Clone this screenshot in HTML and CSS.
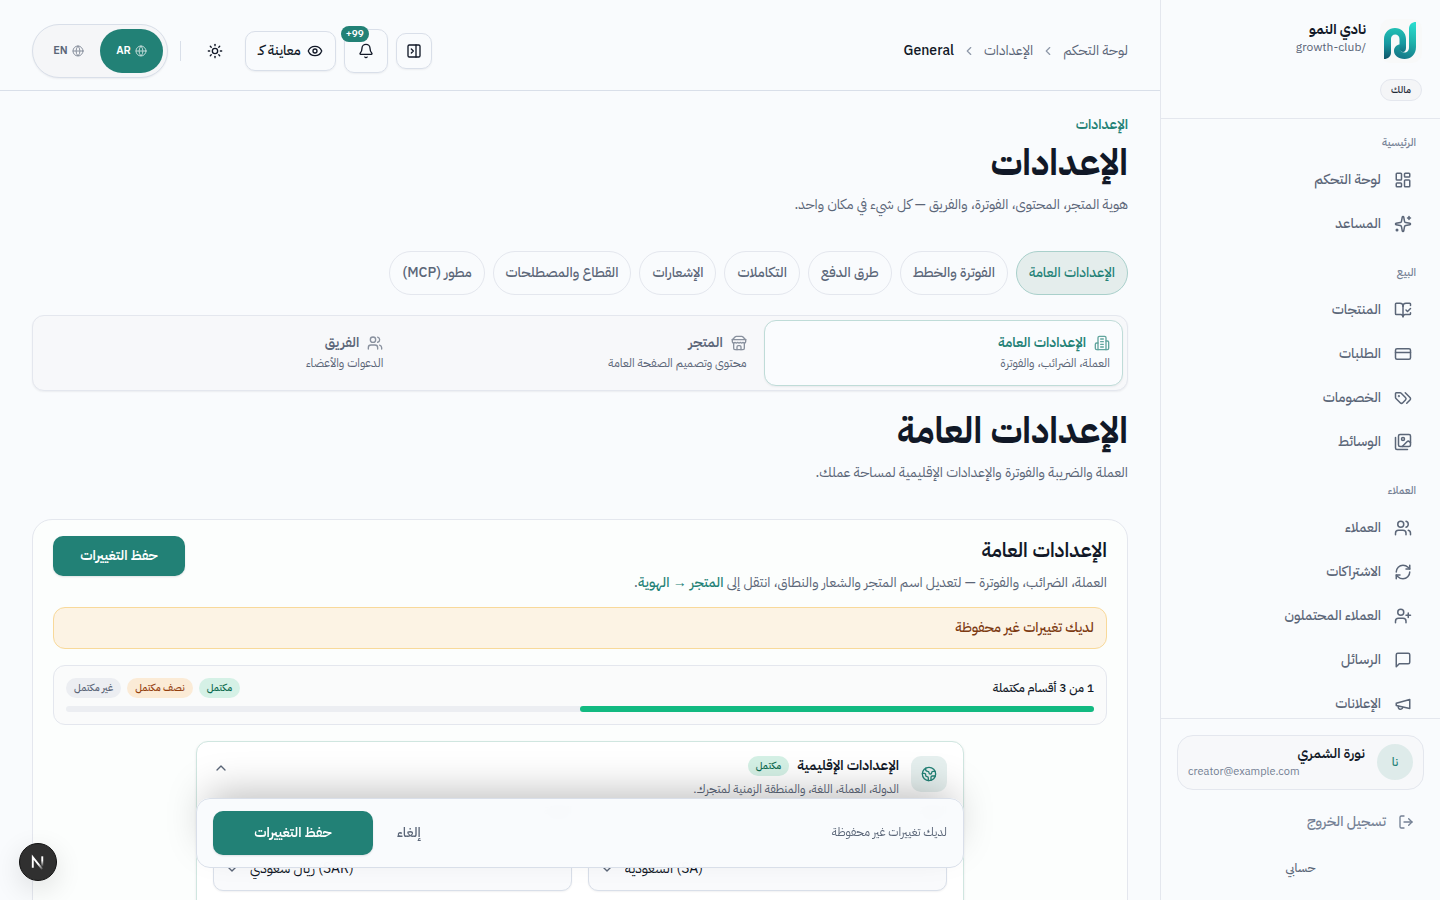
FILE: index.html
```html
<!DOCTYPE html>
<html lang="ar" dir="rtl">
<head>
<meta charset="utf-8">
<meta name="viewport" content="width=device-width, initial-scale=1">
<title>الإعدادات العامة — نادي النمو</title>
<link rel="stylesheet" href="styles.css">
</head>
<body>
<svg class="sprite" aria-hidden="true">
  <symbol id="i-dashboard" viewBox="0 0 24 24"><rect width="7" height="9" x="3" y="3" rx="1"/><rect width="7" height="5" x="14" y="3" rx="1"/><rect width="7" height="9" x="14" y="12" rx="1"/><rect width="7" height="5" x="3" y="16" rx="1"/></symbol>
  <symbol id="i-sparkles" viewBox="0 0 24 24"><path d="M11.017 2.814a1 1 0 0 1 1.966 0l1.051 5.558a2 2 0 0 0 1.594 1.594l5.558 1.051a1 1 0 0 1 0 1.966l-5.558 1.051a2 2 0 0 0-1.594 1.594l-1.051 5.558a1 1 0 0 1-1.966 0l-1.051-5.558a2 2 0 0 0-1.594-1.594l-5.558-1.051a1 1 0 0 1 0-1.966l5.558-1.051a2 2 0 0 0 1.594-1.594z"/><path d="M20 2v4"/><path d="M22 4h-4"/><circle cx="4" cy="20" r="1"/></symbol>
  <symbol id="i-book" viewBox="0 0 24 24"><path d="M12 21V7"/><path d="m16 12 2 2 4-4"/><path d="M22 6V4a1 1 0 0 0-1-1h-5a4 4 0 0 0-4 4 4 4 0 0 0-4-4H3a1 1 0 0 0-1 1v13a1 1 0 0 0 1 1h6a3 3 0 0 1 3 3 3 3 0 0 1 3-3h6a1 1 0 0 0 1-1v-1.3"/></symbol>
  <symbol id="i-card" viewBox="0 0 24 24"><rect width="20" height="14" x="2" y="5" rx="2"/><path d="M2 10h20"/></symbol>
  <symbol id="i-tags" viewBox="0 0 24 24"><path d="m15 5 6.300 6.300a2.400 2.400 0 0 1 0 3.400L17 19"/><path d="M9.586 5.586A2 2 0 0 0 8.172 5H3a1 1 0 0 0-1 1v5.172a2 2 0 0 0 .586 1.414L8.290 18.290a2.426 2.426 0 0 0 3.420 0l3.580-3.580a2.426 2.426 0 0 0 0-3.420z"/><circle cx="6.500" cy="9.500" r=".5" fill="currentColor"/></symbol>
  <symbol id="i-images" viewBox="0 0 24 24"><path d="M18 22H4a2 2 0 0 1-2-2V6"/><path d="m22 13-1.296-1.296a2.410 2.410 0 0 0-3.408 0L11 18"/><circle cx="12" cy="8" r="2"/><rect width="16" height="16" x="6" y="2" rx="2"/></symbol>
  <symbol id="i-users" viewBox="0 0 24 24"><path d="M16 21v-2a4 4 0 0 0-4-4H6a4 4 0 0 0-4 4v2"/><circle cx="9" cy="7" r="4"/><path d="M22 21v-2a4 4 0 0 0-3-3.870"/><path d="M16 3.130a4 4 0 0 1 0 7.750"/></symbol>
  <symbol id="i-refresh" viewBox="0 0 24 24"><path d="M3 12a9 9 0 0 1 9-9 9.750 9.750 0 0 1 6.740 2.740L21 8"/><path d="M21 3v5h-5"/><path d="M21 12a9 9 0 0 1-9 9 9.750 9.750 0 0 1-6.740-2.740L3 16"/><path d="M8 16H3v5"/></symbol>
  <symbol id="i-userplus" viewBox="0 0 24 24"><path d="M16 21v-2a4 4 0 0 0-4-4H6a4 4 0 0 0-4 4v2"/><circle cx="9" cy="7" r="4"/><path d="M19 8v6"/><path d="M22 11h-6"/></symbol>
  <symbol id="i-message" viewBox="0 0 24 24"><path d="M21 15a2 2 0 0 1-2 2H7l-4 4V5a2 2 0 0 1 2-2h14a2 2 0 0 1 2 2z"/></symbol>
  <symbol id="i-megaphone" viewBox="0 0 24 24"><path d="m3 11 18-5v12L3 14v-3z"/><path d="M11.600 16.800a3 3 0 1 1-5.800-1.600"/></symbol>
  <symbol id="i-logout" viewBox="0 0 24 24"><path d="m16 17 5-5-5-5"/><path d="M21 12H9"/><path d="M9 21H5a2 2 0 0 1-2-2V5a2 2 0 0 1 2-2h4"/></symbol>
  <symbol id="i-panel" viewBox="0 0 24 24"><rect width="18" height="18" x="3" y="3" rx="2"/><path d="M15 3v18"/><path d="m8 9 3 3-3 3"/></symbol>
  <symbol id="i-bell" viewBox="0 0 24 24"><path d="M10.268 21a2 2 0 0 0 3.464 0"/><path d="M3.262 15.326A1 1 0 0 0 4 17h16a1 1 0 0 0 .740-1.673C19.410 13.956 18 12.499 18 8A6 6 0 0 0 6 8c0 4.499-1.411 5.956-2.738 7.326"/></symbol>
  <symbol id="i-eye" viewBox="0 0 24 24"><path d="M2.062 12.348a1 1 0 0 1 0-.696 10.750 10.750 0 0 1 19.876 0 1 1 0 0 1 0 .696 10.750 10.750 0 0 1-19.876 0"/><circle cx="12" cy="12" r="3"/></symbol>
  <symbol id="i-sun" viewBox="0 0 24 24"><circle cx="12" cy="12" r="4"/><path d="M12 2v2"/><path d="M12 20v2"/><path d="m4.930 4.930 1.410 1.410"/><path d="m17.660 17.660 1.410 1.410"/><path d="M2 12h2"/><path d="M20 12h2"/><path d="m6.340 17.660-1.410 1.410"/><path d="m19.070 4.930-1.410 1.410"/></symbol>
  <symbol id="i-globe" viewBox="0 0 24 24"><circle cx="12" cy="12" r="10"/><path d="M12 2a14.500 14.500 0 0 0 0 20 14.500 14.500 0 0 0 0-20"/><path d="M2 12h20"/></symbol>
  <symbol id="i-chev-left" viewBox="0 0 24 24"><path d="m15 18-6-6 6-6"/></symbol>
  <symbol id="i-chev-up" viewBox="0 0 24 24"><path d="m18 15-6-6-6 6"/></symbol>
  <symbol id="i-chev-down" viewBox="0 0 24 24"><path d="m6 9 6 6 6-6"/></symbol>
  <symbol id="i-building" viewBox="0 0 24 24"><path d="M6 22V4a2 2 0 0 1 2-2h8a2 2 0 0 1 2 2v18Z"/><path d="M6 12H4a2 2 0 0 0-2 2v6a2 2 0 0 0 2 2h2"/><path d="M18 9h2a2 2 0 0 1 2 2v9a2 2 0 0 1-2 2h-2"/><path d="M10 6h4"/><path d="M10 10h4"/><path d="M10 14h4"/><path d="M10 18h4"/></symbol>
  <symbol id="i-store" viewBox="0 0 24 24"><path d="m2 7 4.410-4.410A2 2 0 0 1 7.830 2h8.340a2 2 0 0 1 1.420.590L22 7"/><path d="M4 12v8a2 2 0 0 0 2 2h12a2 2 0 0 0 2-2v-8"/><path d="M15 22v-4a2 2 0 0 0-2-2h-2a2 2 0 0 0-2 2v4"/><path d="M2 7h20"/><path d="M22 7v3a2 2 0 0 1-2 2 2.700 2.700 0 0 1-1.590-.630.700.700 0 0 0-.820 0A2.700 2.700 0 0 1 16 12a2.700 2.700 0 0 1-1.590-.630.700.700 0 0 0-.820 0A2.700 2.700 0 0 1 12 12a2.700 2.700 0 0 1-1.590-.630.700.700 0 0 0-.820 0A2.700 2.700 0 0 1 8 12a2.700 2.700 0 0 1-1.590-.630.700.700 0 0 0-.820 0A2.700 2.700 0 0 1 4 12a2 2 0 0 1-2-2V7"/></symbol>
  <symbol id="i-earth" viewBox="0 0 24 24"><path d="M21.540 15H17a2 2 0 0 0-2 2v4.540"/><path d="M7 3.340V5a3 3 0 0 0 3 3a2 2 0 0 1 2 2c0 1.100.900 2 2 2a2 2 0 0 0 2-2c0-1.100.900-2 2-2h3.170"/><path d="M11 21.950V18a2 2 0 0 0-2-2a2 2 0 0 1-2-2v-1a2 2 0 0 0-2-2H2.050"/><circle cx="12" cy="12" r="10"/></symbol>
</svg>

<div class="app">
  <aside class="sidebar">
    <div class="brand">
      <div class="brand-row">
        <span class="brand-logo">
          <svg viewBox="0 0 42 44" aria-hidden="true">
            <defs>
              <linearGradient id="lg-a" x1="0" y1="0" x2="0" y2="1"><stop offset="0" stop-color="#22c0b4"/><stop offset=".5" stop-color="#1798a0"/><stop offset="1" stop-color="#0f5468"/></linearGradient>
              <linearGradient id="lg-b" gradientUnits="userSpaceOnUse" x1="33" y1="2" x2="20" y2="40"><stop offset="0" stop-color="#2be0d2"/><stop offset=".5" stop-color="#1fb3ac"/><stop offset="1" stop-color="#157486"/></linearGradient>
            </defs>
            <path fill="url(#lg-b)" d="M36 3v25c0 7.500-5 12-11.500 12C18 40 14 36 14 32c0-4 3-6.500 6-6.500v4c0 2.500 2 4 4.500 4s4.500-1.500 4.500-5.500V10c0-4.500 3-7 7-7Z"/>
            <path fill="url(#lg-a)" d="M4 40V20C4 13.500 9 9 15 9s11 4.500 11 11v9c0 2.500-1.500 4-3 4s-3.500-1.500-3.500-3.500V20c0-3-2-4.500-4.300-4.500S11 17 11 20v13.500c0 4-3 6.500-7 6.500Z"/>
          </svg>
        </span>
        <div class="brand-text">
          <strong class="brand-name">نادي النمو</strong>
          <span class="brand-slug">/growth-club</span>
        </div>
      </div>
      <span class="role">مالك</span>
    </div>

    <nav class="nav" aria-label="القائمة الرئيسية">
      <section class="nav-group">
        <h2 class="nav-label">الرئيسية</h2>
        <a class="nav-item" href="#"><svg class="icon"><use href="#i-dashboard"/></svg>لوحة التحكم</a>
        <a class="nav-item" href="#"><svg class="icon"><use href="#i-sparkles"/></svg>المساعد</a>
      </section>
      <section class="nav-group">
        <h2 class="nav-label">البيع</h2>
        <a class="nav-item" href="#"><svg class="icon"><use href="#i-book"/></svg>المنتجات</a>
        <a class="nav-item" href="#"><svg class="icon"><use href="#i-card"/></svg>الطلبات</a>
        <a class="nav-item" href="#"><svg class="icon"><use href="#i-tags"/></svg>الخصومات</a>
        <a class="nav-item" href="#"><svg class="icon"><use href="#i-images"/></svg>الوسائط</a>
      </section>
      <section class="nav-group">
        <h2 class="nav-label">العملاء</h2>
        <a class="nav-item" href="#"><svg class="icon"><use href="#i-users"/></svg>العملاء</a>
        <a class="nav-item" href="#"><svg class="icon"><use href="#i-refresh"/></svg>الاشتراكات</a>
        <a class="nav-item" href="#"><svg class="icon"><use href="#i-userplus"/></svg>العملاء المحتملون</a>
        <a class="nav-item" href="#"><svg class="icon"><use href="#i-message"/></svg>الرسائل</a>
        <a class="nav-item" href="#"><svg class="icon"><use href="#i-megaphone"/></svg>الإعلانات</a>
      </section>
    </nav>

    <div class="side-foot">
      <div class="user">
        <span class="avatar">نا</span>
        <div class="user-text">
          <strong class="user-name">نورة الشمري</strong>
          <span class="user-mail" dir="ltr">creator@example.com</span>
        </div>
      </div>
      <button class="logout" type="button"><svg class="icon"><use href="#i-logout"/></svg>تسجيل الخروج</button>
      <a class="account" href="#">حسابي</a>
    </div>
  </aside>

  <div class="main">
    <header class="topbar">
      <nav class="crumbs" aria-label="مسار التنقل">
        <a href="#">لوحة التحكم</a>
        <svg class="icon"><use href="#i-chev-left"/></svg>
        <a href="#">الإعدادات</a>
        <svg class="icon"><use href="#i-chev-left"/></svg>
        <span class="crumb-now">General</span>
      </nav>
      <div class="tools">
        <button class="tool tool-panel" type="button" aria-label="طي القائمة"><svg class="icon"><use href="#i-panel"/></svg></button>
        <button class="tool tool-bell" type="button" aria-label="الإشعارات"><svg class="icon"><use href="#i-bell"/></svg><span class="count">99+</span></button>
        <button class="tool tool-preview" type="button"><svg class="icon"><use href="#i-eye"/></svg>معاينة كـ</button>
        <button class="tool-theme" type="button" aria-label="المظهر"><svg class="icon"><use href="#i-sun"/></svg></button>
        <span class="rule"></span>
        <div class="langs">
          <button class="lang lang-on" type="button"><svg class="icon"><use href="#i-globe"/></svg>AR</button>
          <button class="lang" type="button"><svg class="icon"><use href="#i-globe"/></svg>EN</button>
        </div>
      </div>
    </header>

    <main class="content">
      <p class="eyebrow">الإعدادات</p>
      <h1 class="title">الإعدادات</h1>
      <p class="lead">هوية المتجر، المحتوى، الفوترة، والفريق — كل شيء في مكان واحد.</p>

      <nav class="tabs" aria-label="أقسام الإعدادات">
        <a class="tab tab-on" href="#">الإعدادات العامة</a>
        <a class="tab" href="#">الفوترة والخطط</a>
        <a class="tab" href="#">طرق الدفع</a>
        <a class="tab" href="#">التكاملات</a>
        <a class="tab" href="#">الإشعارات</a>
        <a class="tab" href="#">القطاع والمصطلحات</a>
        <a class="tab" href="#">مطور (MCP)</a>
      </nav>

      <nav class="areas" aria-label="الإعدادات العامة">
        <a class="area area-on" href="#"><span class="area-title"><svg class="icon"><use href="#i-building"/></svg>الإعدادات العامة</span><span class="area-sub">العملة، الضرائب، والفوترة</span></a>
        <a class="area" href="#"><span class="area-title"><svg class="icon"><use href="#i-store"/></svg>المتجر</span><span class="area-sub">محتوى وتصميم الصفحة العامة</span></a>
        <a class="area" href="#"><span class="area-title"><svg class="icon"><use href="#i-users"/></svg>الفريق</span><span class="area-sub">الدعوات والأعضاء</span></a>
      </nav>

      <h2 class="title">الإعدادات العامة</h2>
      <p class="lead">العملة والضريبة والفوترة والإعدادات الإقليمية لمساحة عملك.</p>

      <form class="panel">
        <div class="panel-head">
          <div>
            <h3 class="panel-title">الإعدادات العامة</h3>
            <p class="panel-desc">العملة، الضرائب، والفوترة — لتعديل اسم المتجر والشعار والنطاق، انتقل إلى <a href="#">المتجر <span class="arrow">→</span> الهوية</a>.</p>
          </div>
          <button class="save" type="button">حفظ التغييرات</button>
        </div>
        <div class="notice" role="status">لديك تغييرات غير محفوظة</div>
        <div class="progress">
          <div class="progress-row">
            <span class="progress-text">1 من 3 أقسام مكتملة</span>
            <span class="chips"><span class="chip chip-done">مكتمل</span><span class="chip chip-half">نصف مكتمل</span><span class="chip">غير مكتمل</span></span>
          </div>
          <div class="track"><div class="fill" style="width:50%"></div></div>
        </div>

        <div class="sections">
          <section class="region">
            <div class="region-head">
              <span class="region-icon"><svg class="icon"><use href="#i-earth"/></svg></span>
              <div class="region-text">
                <h4 class="region-title">الإعدادات الإقليمية <span class="chip chip-done">مكتمل</span></h4>
                <p class="region-desc">الدولة، العملة، اللغة، والمنطقة الزمنية لمتجرك.</p>
              </div>
              <button class="collapse" type="button" aria-label="طي القسم"><svg class="icon"><use href="#i-chev-up"/></svg></button>
            </div>
            <div class="fields">
              <div class="field">
                <label for="country">الدولة</label>
                <span class="select"><select id="country"><option>السعودية (SA)</option></select><svg class="icon"><use href="#i-chev-down"/></svg></span>
              </div>
              <div class="field">
                <label for="currency">العملة</label>
                <span class="select"><select id="currency"><option>ريال سعودي (SAR)</option></select><svg class="icon"><use href="#i-chev-down"/></svg></span>
              </div>
            </div>
          </section>
          <div class="savebar">
            <span class="savebar-text">لديك تغييرات غير محفوظة</span>
            <button class="cancel" type="button">إلغاء</button>
            <button class="save save-wide" type="button">حفظ التغييرات</button>
          </div>
        </div>
      </form>
    </main>
  </div>
</div>

<button class="dev" type="button" aria-label="أدوات المطور">
  <svg viewBox="0 0 38 38" aria-hidden="true">
    <defs>
      <linearGradient id="lg-n" x1="0" y1="0" x2="0" y2="1"><stop offset=".4" stop-color="#fff"/><stop offset="1" stop-color="#fff" stop-opacity="0"/></linearGradient>
      <linearGradient id="lg-m" gradientUnits="userSpaceOnUse" x1="18" y1="18" x2="25" y2="27"><stop offset=".3" stop-color="#fff"/><stop offset="1" stop-color="#fff" stop-opacity="0"/></linearGradient>
    </defs>
    <path d="M13.500 25V14L23.500 26.500" fill="none" stroke="url(#lg-m)" stroke-width="2"/>
    <rect x="22.500" y="13" width="2" height="11" fill="url(#lg-n)"/>
  </svg>
</button>
</body>
</html>
```
FILE: styles.css
```css
:root {
  --bg: #f9fbfd;
  --ink: #111827;
  --muted: #5b6678;
  --soft: #748094;
  --line: #e4e7ee;
  --line-strong: #d9dfe9;
  --brand: #228176;
  --shadow: 0 1px 2px rgba(15, 23, 42, .06);
}

* { box-sizing: border-box; }

body {
  margin: 0;
  background: var(--bg);
  color: var(--ink);
  font: 400 14px/20px "IBM Plex Sans Arabic", "Liberation Sans", sans-serif;
}

h1, h2, h3, h4, p { margin: 0; }
a { color: inherit; text-decoration: none; }
button, select { font: inherit; color: inherit; }
button { cursor: pointer; padding: 0; border: 0; background: none; }

.sprite { position: absolute; width: 0; height: 0; }

.icon {
  flex: none;
  width: 16px;
  height: 16px;
  fill: none;
  stroke: currentColor;
  stroke-width: 2;
  stroke-linecap: round;
  stroke-linejoin: round;
}

.app { display: flex; height: 100vh; }

/* Sidebar */
.sidebar {
  flex: none;
  width: 280px;
  display: flex;
  flex-direction: column;
  border-inline-end: 1px solid var(--line);
}
.brand { padding: 19px 18px 17px; border-bottom: 1px solid var(--line); }
.brand-row { display: flex; gap: 14px; }
.brand-logo { width: 42px; height: 44px; border-radius: 10px; background: #f8f9f9; }
.brand-logo svg { display: block; width: 42px; height: 44px; }
.brand-text { display: flex; flex-direction: column; padding-top: 1px; }
.brand-name { font-weight: 700; }
.brand-slug { font-size: 12px; line-height: 14px; color: var(--muted); }
.role {
  display: block;
  width: fit-content;
  margin-top: 16px;
  padding: 0 10px;
  border: 1px solid var(--line);
  border-radius: 11px;
  background: #f4f5f7;
  font-size: 10px;
  font-weight: 500;
  color: #1f2937;
}
.nav { flex: 1; min-height: 0; overflow: hidden; padding: 9px 12px 0; }
.nav-group { display: flex; flex-direction: column; margin-bottom: 12px; }
.nav-label {
  padding: 0 12px;
  font-size: 11px;
  font-weight: 500;
  line-height: 30px;
  color: var(--soft);
}
.nav-item {
  display: flex;
  align-items: center;
  gap: 13px;
  height: 44px;
  padding: 0 16px;
  font-weight: 500;
  color: var(--muted);
}
.nav-item .icon { width: 18px; height: 18px; }
.side-foot { padding: 16px 16px 14px; border-top: 1px solid var(--line); }
.user {
  display: flex;
  gap: 12px;
  padding: 8px 10px;
  border: 1px solid var(--line);
  border-radius: 16px;
  background: #f7f8fa;
}
.avatar {
  display: grid;
  place-items: center;
  width: 36px;
  height: 36px;
  border-radius: 50%;
  background: #deebea;
  color: var(--brand);
  font-size: 12px;
  font-weight: 500;
}
.user-text { flex: 1; display: flex; flex-direction: column; }
.user-name { font-weight: 600; line-height: 19px; }
.user-mail { font-size: 11px; line-height: 18px; color: var(--soft); text-align: left; }
.logout {
  display: flex;
  align-items: center;
  gap: 12px;
  width: 100%;
  height: 44px;
  margin-top: 10px;
  padding: 0 10px;
  font-weight: 500;
  color: var(--soft);
}
.account {
  display: block;
  margin-top: 6px;
  font-size: 12px;
  font-weight: 500;
  line-height: 36px;
  text-align: center;
  color: var(--muted);
}

/* Top bar */
.main { flex: 1; min-width: 0; overflow-y: auto; scrollbar-width: none; }
.topbar {
  position: sticky;
  top: 0;
  z-index: 5;
  display: flex;
  align-items: center;
  justify-content: space-between;
  padding: 24px 32px 12px;
  border-bottom: 1px solid var(--line-strong);
  background: var(--bg);
}
.crumbs { display: flex; align-items: center; gap: 8px; color: var(--muted); }
.crumbs .icon { width: 14px; height: 14px; color: var(--soft); opacity: .8; }
.crumb-now { font-weight: 500; color: var(--ink); }
.tools { display: flex; align-items: center; gap: 8px; }
.tool {
  position: relative;
  display: flex;
  align-items: center;
  justify-content: center;
  gap: 6px;
  border: 1px solid var(--line-strong);
  border-radius: 10px;
  box-shadow: var(--shadow);
  font-weight: 500;
}
.tool-panel { width: 36px; height: 36px; }
.tool-bell { width: 44px; height: 44px; }
.tool-preview { height: 40px; padding: 0 12px; }
.tool-theme { display: grid; place-items: center; width: 44px; height: 44px; }
.count {
  position: absolute;
  top: -4px;
  right: 18px;
  min-width: 28px;
  border-radius: 8px;
  background: var(--brand);
  color: #fff;
  font-size: 10px;
  font-weight: 600;
  line-height: 16px;
  text-align: center;
}
.rule { width: 1px; height: 20px; margin: 0 4px; background: var(--line-strong); }
.langs {
  display: flex;
  padding: 4px;
  border: 1px solid var(--line-strong);
  border-radius: 27px;
  background: #f5f6f8;
  box-shadow: var(--shadow);
}
.lang {
  display: flex;
  align-items: center;
  justify-content: center;
  gap: 4px;
  width: 63px;
  height: 44px;
  border-radius: 22px;
  font-size: 11px;
  font-weight: 600;
  color: var(--muted);
}
.lang .icon { width: 12px; height: 12px; opacity: .7; }
.lang-on { background: var(--brand); color: #fff; }

/* Content */
.content { padding: 24px 32px 32px; }
.eyebrow { font-weight: 600; color: var(--brand); }
.title { margin: 6px 0 7px; font-size: 36px; font-weight: 700; line-height: 45px; }
.lead { margin-bottom: 34px; line-height: 24px; color: var(--muted); }
.tabs { display: flex; gap: 8px; margin-bottom: 20px; }
.tab {
  padding: 0 12px;
  border: 1px solid var(--line);
  border-radius: 22px;
  line-height: 42px;
  font-weight: 500;
  color: var(--muted);
}
.tab-on { border-color: #a9d0cb; background: #e4edec; color: var(--brand); }
.areas {
  display: grid;
  grid-template-columns: repeat(3, 1fr);
  gap: 4px;
  margin-bottom: 18px;
  padding: 4px;
  border: 1px solid var(--line);
  border-radius: 12px;
  background: #f7f8fa;
  box-shadow: var(--shadow);
}
.area {
  display: flex;
  flex-direction: column;
  gap: 1px;
  padding: 11px 12px 14px;
  border: 1px solid transparent;
  border-radius: 12px;
  color: var(--muted);
}
.area-title { display: flex; align-items: center; gap: 8px; line-height: 22px; font-weight: 600; }
.area-title .icon { opacity: .7; }
.area-sub { font-size: 12px; line-height: 16px; }
.area-on { border-color: #bfdcd8; background: #fafcfe; box-shadow: var(--shadow); }
.area-on .area-title { color: var(--brand); }

.panel {
  display: flex;
  flex-direction: column;
  gap: 16px;
  padding: 16px 20px 20px;
  border: 1px solid var(--line);
  border-radius: 20px;
  background: #fcfefd;
}
.panel-head { display: flex; justify-content: space-between; align-items: flex-start; margin-bottom: -4px; }
.panel-title { font-size: 20px; font-weight: 600; line-height: 28px; }
.panel-desc { margin-top: 6px; line-height: 24px; color: var(--muted); }
.panel-desc a { font-weight: 500; color: var(--brand); }
.arrow { font-family: "Liberation Sans", sans-serif; font-weight: 400; }
.save {
  width: 132px;
  height: 40px;
  border-radius: 10px;
  background: var(--brand);
  box-shadow: 0 1px 2px rgba(15, 23, 42, .12);
  color: #fff;
  font-weight: 600;
}
.save-wide { width: 160px; height: 44px; }
.notice {
  padding: 10px 12px;
  border: 1px solid #f8d99a;
  border-radius: 12px;
  background: #fcf3e4;
  font-weight: 500;
  color: #7c3a12;
}
.progress {
  display: flex;
  flex-direction: column;
  gap: 8px;
  padding: 12px;
  border: 1px solid var(--line);
  border-radius: 12px;
  background: #fafbfb;
}
.progress-row { display: flex; justify-content: space-between; }
.progress-text { font-size: 12px; font-weight: 500; }
.chips { display: flex; gap: 6px; }
.chip {
  padding: 0 8px;
  border-radius: 10px;
  background: #eceef2;
  font-size: 10px;
  font-weight: 500;
  line-height: 20px;
  color: var(--muted);
}
.chip-done { background: #d5f1e6; color: #0d6b50; }
.chip-half { background: #fbebd6; color: #94400e; }
.track { height: 6px; border-radius: 3px; background: #eceef2; }
.fill { height: 6px; border-radius: 3px; background: #12ba81; }

.sections { width: 100%; max-width: 768px; margin: 0 auto; }
.region {
  min-height: 240px;
  padding: 14px 16px;
  border: 1px solid #d0e6e0;
  border-radius: 12px;
  background: #fff;
  box-shadow: 0 1px 3px rgba(15, 23, 42, .08);
}
.region-head { display: flex; gap: 12px; }
.region-icon {
  display: grid;
  place-items: center;
  width: 36px;
  height: 36px;
  border-radius: 10px;
  background: #e6f0ef;
  color: var(--brand);
}
.region-text { flex: 1; }
.region-title { display: flex; align-items: center; gap: 8px; font-size: 14px; font-weight: 600; line-height: 20px; }
.region-desc { margin-top: 4px; font-size: 12px; line-height: 18px; color: var(--muted); }
.collapse { height: 30px; width: 16px; color: var(--muted); }
.fields { display: grid; grid-template-columns: 1fr 1fr; gap: 16px; margin-top: 5px; }
.field label { display: block; margin-bottom: 28px; font-size: 12px; font-weight: 500; line-height: 16px; }
.select { position: relative; display: block; }
.select select {
  appearance: none;
  direction: ltr;
  width: 100%;
  height: 44px;
  padding: 0 36px;
  border: 1px solid var(--line-strong);
  border-radius: 10px;
  background: #f9fafc;
  box-shadow: var(--shadow);
}
.select .icon { position: absolute; top: 14px; left: 11px; color: var(--muted); }

.savebar {
  position: sticky;
  bottom: 32px;
  z-index: 2;
  display: flex;
  align-items: center;
  gap: 12px;
  margin-top: 16px;
  padding: 12px 16px;
  border: 1px solid var(--line-strong);
  border-radius: 14px;
  background: rgba(249, 251, 253, .96);
  backdrop-filter: blur(8px);
  box-shadow: 0 -16px 40px -12px rgba(0, 0, 0, .28);
}
.savebar-text { margin-inline-end: auto; padding-bottom: 3px; font-size: 12px; color: var(--muted); }
.cancel { height: 44px; padding: 0 12px; font-weight: 500; color: var(--muted); }

.dev {
  position: fixed;
  left: 19px;
  bottom: 19px;
  width: 38px;
  height: 38px;
  border: 1px solid #111;
  border-radius: 50%;
  background: #303030;
  box-shadow: 0 8px 28px rgba(0, 0, 0, .12);
}
.dev svg { display: block; width: 36px; height: 36px; }
```
